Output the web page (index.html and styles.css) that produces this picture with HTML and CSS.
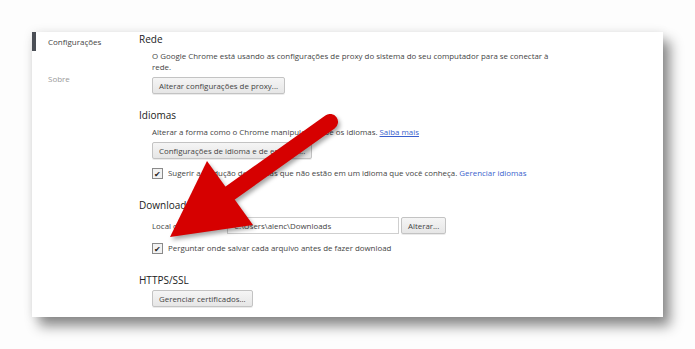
FILE: index.html
```html
<!DOCTYPE html>
<html lang="pt-BR">
  <head>
    <meta charset="UTF-8" />
    <meta name="viewport" content="width=device-width, initial-scale=1.0" />
    <title>Configurações</title>
    <link rel="stylesheet" href="styles.css">
  </head>
  <body>
    <div class="page">
      <div class="panel">
        <nav class="sidebar">
          <div class="nav-item active">Configurações</div>
          <div class="nav-item">Sobre</div>
        </nav>

        <main class="content">
          <section class="section">
            <h3>Rede</h3>
            <div class="body">
              <p>O Google Chrome está usando as configurações de proxy do sistema do seu computador para se conectar à rede.</p>
              <button class="btn">Alterar configurações de proxy...</button>
            </div>
          </section>

          <section class="section">
            <h3>Idiomas</h3>
            <div class="body">
              <p>Alterar a forma como o Chrome manipula e exibe os idiomas. <a href="#" class="link">Saiba mais</a></p>
              <button class="btn">Configurações de idioma e de entrada...</button>
              <label class="check">
                <span class="box">&#10004;</span>
                <span>Sugerir a tradução de páginas que não estão em um idioma que você conheça. <a href="#" class="link plain">Gerenciar idiomas</a></span>
              </label>
            </div>
          </section>

          <section class="section">
            <h3>Downloads</h3>
            <div class="body">
              <div class="row">
                <span>Local de download:</span>
                <input class="field" type="text" value="C:\Users\alenc\Downloads" />
                <button class="btn">Alterar...</button>
              </div>
              <label class="check">
                <span class="box">&#10004;</span>
                <span>Perguntar onde salvar cada arquivo antes de fazer download</span>
              </label>
            </div>
          </section>

          <section class="section">
            <h3>HTTPS/SSL</h3>
            <div class="body">
              <button class="btn">Gerenciar certificados...</button>
            </div>
          </section>
        </main>
      </div>

      <!-- seta por cima do conteúdo -->
      <svg class="arrow" width="695" height="349" viewBox="0 0 695 349">
        <line x1="330" y1="122" x2="226" y2="196" stroke="#d60000" stroke-width="16" stroke-linecap="round" />
        <polygon points="170,237 207,161 253,225" fill="#d60000" />
      </svg>
    </div>
  </body>
</html>
```

FILE: styles.css
```css
body {
  font-family: "Open Sans", "Noto Sans", sans-serif;
  background-color: #fdfdfd;
  color: #444;
  margin: 0;
}
.page {
  position: relative;
  width: 695px;
  height: 349px;
  padding: 32px 0 0 32px;
  box-sizing: border-box;
  overflow: hidden;
}
.panel {
  width: 631px;
  height: 285px;
  background: #fff;
  display: flex;
  box-shadow: 7px 9px 12px rgba(0, 0, 0, 0.45), 0 0 10px rgba(0, 0, 0, 0.08);
  overflow: hidden;
}
.sidebar {
  width: 107px;
  flex-shrink: 0;
}
.nav-item {
  font-size: 8px;
  line-height: 19px;
  padding-left: 16px;
  color: #999;
  border-left: 4px solid transparent;
  margin-left: -4px;
}
.nav-item.active {
  color: #444;
  border-left-color: #4b4f56;
  margin-left: 0;
  padding-left: 12px;
  margin-bottom: 18px;
}
.content {
  flex: 1;
}
.section {
  margin-bottom: 14px;
}
.section h3 {
  font-size: 10px;
  font-weight: normal;
  color: #222;
  line-height: 14px;
  margin: 0 0 5px;
}
.section:last-child h3 {
  margin-bottom: 3px;
}
.body {
  display: flow-root;
  padding-left: 13px;
  font-size: 7.9px;
  width: 410px;
}
p {
  margin: 0 0 4px;
  line-height: 11px;
}
.link {
  color: #3a5fcd;
}
.link.plain {
  text-decoration: none;
}
.btn {
  font-family: inherit;
  font-size: 7.9px;
  color: #444;
  height: 17px;
  padding: 0 6px;
  border: 1px solid #c3c3c3;
  border-radius: 2px;
  background: linear-gradient(#f5f5f5, #e6e6e6);
  box-shadow: 0 1px 0 rgba(0, 0, 0, 0.08);
  display: block;
}
.check {
  display: flex;
  align-items: center;
  gap: 5px;
  margin-top: 8px;
  margin-bottom: 5px;
  line-height: 12px;
}
.box {
  width: 9px;
  height: 9px;
  border: 1px solid #8a8a8a;
  background: #f2f2f2;
  font-size: 8px;
  line-height: 9px;
  text-align: center;
  color: #222;
}
.row {
  display: flex;
  align-items: center;
  gap: 2px;
  height: 17px;
}
.field {
  font-family: inherit;
  font-size: 7.9px;
  color: #444;
  width: 172px;
  height: 17px;
  box-sizing: border-box;
  border: 1px solid #cfcfcf;
  padding: 0 6px;
  margin-left: 2px;
}
.arrow {
  position: absolute;
  top: 0;
  left: 0;
  pointer-events: none;
  filter: drop-shadow(2px 3px 2px rgba(0, 0, 0, 0.35));
}
```
